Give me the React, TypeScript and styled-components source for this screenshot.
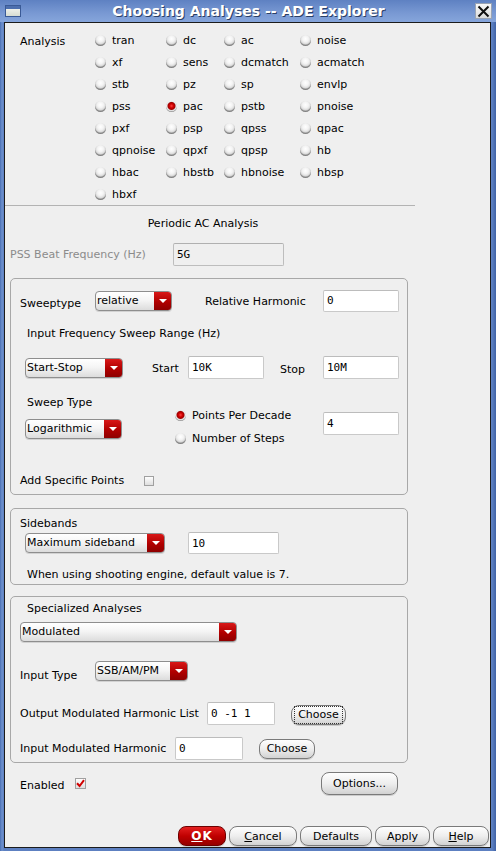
import React from 'react';
import styled, { createGlobalStyle } from 'styled-components';

const GlobalStyle = createGlobalStyle`
  html, body {
    margin: 0;
    padding: 0;
    background: #5d80c1;
  }
  body {
    font-family: 'DejaVu Sans', 'Liberation Sans', sans-serif;
    font-size: 11px;
    color: #000;
  }
  * {
    box-sizing: border-box;
  }
`;

const Frame = styled.div`
  width: 496px;
  height: 851px;
  display: flex;
  flex-direction: column;
  background: linear-gradient(to right, #4a6fb3, #6d90cd 2px, #5d80c1 4px, #5d80c1 calc(100% - 4px), #3f62a6);
`;

const TitleBar = styled.div`
  height: 22px;
  display: grid;
  grid-template-columns: 1fr auto 1fr;
  align-items: center;
  padding: 0 4px 0 5px;
  background: linear-gradient(#5e81c2, #7999d3 60%, #86a5db);
`;

const AppIcon = styled.div`
  width: 16px;
  height: 12px;
  border: 1px solid #3a5a96;
  background: linear-gradient(#4d6fae 0, #4d6fae 3px, #eef0ea 3px, #d6dcd2);
  justify-self: start;
`;

const TitleText = styled.div`
  color: #fff;
  font-weight: bold;
  font-size: 14px;
  text-shadow: 1px 1px 0 #2b3f66;
  white-space: nowrap;
`;

const CloseBox = styled.div`
  justify-self: end;
  width: 17px;
  height: 16px;
  border: 1px solid #9aa4b4;
  background: linear-gradient(#f8f8f8, #dcdcdc);
  display: flex;
  align-items: center;
  justify-content: center;
`;

const Body = styled.div`
  flex: 1;
  margin: 0 5px 3px 4px;
  border: 1px solid #1b1b1b;
  background: #efefef;
  display: flex;
  flex-direction: column;
`;

const AnalysisSection = styled.div`
  display: flex;
  padding: 6px 0 0 15px;
`;

const SectionLabel = styled.div`
  width: 75px;
  line-height: 22px;
  padding-top: 2px;
`;

const RadioGrid = styled.div`
  display: grid;
  grid-template-columns: 71px 58px 76px 80px;
  grid-auto-rows: 22px;
`;

const RadioItem = styled.label<{ $h?: number }>`
  display: flex;
  align-items: center;
  gap: 6px;
  height: ${p => p.$h ?? 22}px;
  white-space: nowrap;
`;

const RadioDot = styled.span<{ $on?: boolean }>`
  width: 11px;
  height: 11px;
  border-radius: 50%;
  flex: none;
  background: ${p =>
    p.$on
      ? 'radial-gradient(circle at 50% 45%, #ff4040 0, #d00000 2px, #a00000 3.5px, #e6e6e6 4.5px, #f6f6f6 5px, #bdbdbd 6px)'
      : 'radial-gradient(circle at 50% 35%, #ffffff 0, #f3f3f3 3px, #dcdcdc 5px, #a9a9a9 6px)'};
  box-shadow: inset 0 -1px 1px rgba(0, 0, 0, 0.25);
`;

const Separator = styled.div`
  height: 1px;
  width: 410px;
  background: #b3b3b3;
`;

const Heading = styled.div`
  width: 396px;
  margin-top: 10px;
  text-align: center;
  line-height: 16px;
`;

const Row = styled.div<{ $mt?: number; $pl?: number; $h?: number }>`
  display: flex;
  align-items: center;
  margin-top: ${p => p.$mt ?? 0}px;
  padding-left: ${p => p.$pl ?? 0}px;
  height: ${p => (p.$h ? `${p.$h}px` : 'auto')};
`;

const Label = styled.span<{ $w?: number; $dy?: number; $muted?: boolean; $ml?: number }>`
  width: ${p => (p.$w ? `${p.$w}px` : 'auto')};
  flex: none;
  margin-left: ${p => p.$ml ?? 0}px;
  padding-top: ${p => p.$dy ?? 0}px;
  color: ${p => (p.$muted ? '#8b8b8b' : '#000')};
  white-space: nowrap;
  line-height: 16px;
`;

const Caption = styled.div<{ $mt?: number; $pl?: number }>`
  margin-top: ${p => p.$mt ?? 0}px;
  padding-left: ${p => p.$pl ?? 0}px;
  line-height: 16px;
  white-space: nowrap;
`;

const TextField = styled.div<{ $w: number; $h?: number; $mt?: number; $ml?: number; $disabled?: boolean }>`
  width: ${p => p.$w}px;
  height: ${p => p.$h ?? 23}px;
  flex: none;
  margin-top: ${p => p.$mt ?? 0}px;
  margin-left: ${p => p.$ml ?? 0}px;
  border: 1px solid ${p => (p.$disabled ? '#bdbdbd' : '#c9c9c9')};
  border-top-color: ${p => (p.$disabled ? '#b0b0b0' : '#bcbcbc')};
  border-radius: 2px;
  background: ${p => (p.$disabled ? '#efefef' : '#fff')};
  padding-left: 3px;
  display: flex;
  align-items: center;
  font-family: 'DejaVu Sans Mono', 'Liberation Mono', monospace;
  font-size: 11px;
  white-space: pre;
`;

const DropBox = styled.div<{ $w: number; $mt?: number }>`
  width: ${p => p.$w}px;
  height: 20px;
  flex: none;
  margin-top: ${p => p.$mt ?? 0}px;
  display: flex;
  border: 1px solid #8e8e8e;
  border-radius: 4px;
  overflow: hidden;
  background: linear-gradient(#ffffff, #f5f5f5 45%, #dcdcdc);
  box-shadow: 0 1px 0 rgba(0, 0, 0, 0.12);
`;

const DropText = styled.span`
  flex: 1;
  padding-left: 1px;
  line-height: 17px;
  white-space: nowrap;
`;

const DropArrow = styled.span`
  width: 17px;
  flex: none;
  display: flex;
  align-items: center;
  justify-content: center;
  background: linear-gradient(#d81818, #b00000 55%, #8e0000);
  &::after {
    content: '';
    border-left: 4px solid transparent;
    border-right: 4px solid transparent;
    border-top: 4px solid #fff;
  }
`;

const Group = styled.div<{ $h: number; $mt: number }>`
  width: 398px;
  height: ${p => p.$h}px;
  margin: ${p => p.$mt}px 0 0 5px;
  border: 1px solid #a8a8a8;
  border-radius: 5px;
  display: flex;
  flex-direction: column;
`;

const SweepBlock = styled.div`
  display: flex;
  align-items: flex-start;
  margin-top: 15px;
  padding-left: 14px;
`;

const SweepLeft = styled.div`
  width: 97px;
  display: flex;
  flex-direction: column;
`;

const SweepRadios = styled.div`
  width: 148px;
  margin: 9px 0 0 53px;
  display: flex;
  flex-direction: column;
`;

const CheckBox = styled.span<{ $w?: number }>`
  width: ${p => p.$w ?? 11}px;
  height: ${p => p.$w ?? 11}px;
  flex: none;
  border: 1px solid #a0a0a0;
  background: linear-gradient(#fefefe, #dedede);
  display: flex;
  align-items: center;
  justify-content: center;
`;

const PushButton = styled.button<{ $w: number; $h?: number; $ml?: number; $mt?: number }>`
  width: ${p => p.$w}px;
  height: ${p => p.$h ?? 20}px;
  flex: none;
  margin: ${p => p.$mt ?? 0}px 0 0 ${p => p.$ml ?? 0}px;
  padding: 0;
  border: 1px solid #7a7a7a;
  border-radius: 8px;
  background: linear-gradient(#fefefe, #eeeeee 50%, #d2d2d2);
  font-family: 'DejaVu Sans', 'Liberation Sans', sans-serif;
  font-size: 11px;
  color: #000;
  display: flex;
  align-items: center;
  justify-content: center;
  box-shadow: 0 1px 0 rgba(0, 0, 0, 0.15);
`;

const FocusRing = styled.span`
  outline: 1px dotted #333;
  outline-offset: 0;
  padding: 1px 3px;
  line-height: 14px;
`;

const OkButton = styled(PushButton)`
  border-color: #6d0000;
  background: linear-gradient(#e42020, #c00000 50%, #950000);
  color: #fff;
  font-weight: bold;
  font-size: 12px;
  letter-spacing: 1px;
`;

const EnabledRow = styled.div`
  display: flex;
  align-items: center;
  width: 393px;
  height: 23px;
  margin-top: 9px;
  padding-left: 15px;
`;

const Spacer = styled.div`
  flex: 1;
`;

const ButtonBar = styled.div`
  margin-top: auto;
  display: flex;
  justify-content: flex-end;
  gap: 3px;
  padding: 0 1px 1px 0;
`;

const analyses = [
  'tran', 'dc', 'ac', 'noise',
  'xf', 'sens', 'dcmatch', 'acmatch',
  'stb', 'pz', 'sp', 'envlp',
  'pss', 'pac', 'pstb', 'pnoise',
  'pxf', 'psp', 'qpss', 'qpac',
  'qpnoise', 'qpxf', 'qpsp', 'hb',
  'hbac', 'hbstb', 'hbnoise', 'hbsp',
  'hbxf',
];

const Dropdown = ({ value, w, mt }: { value: string; w: number; mt?: number }) => (
  <DropBox $w={w} $mt={mt}>
    <DropText>{value}</DropText>
    <DropArrow />
  </DropBox>
);

const App = () => (
  <>
    <GlobalStyle />
    <Frame>
      <TitleBar>
        <AppIcon />
        <TitleText>Choosing Analyses -- ADE Explorer</TitleText>
        <CloseBox>
          <svg width="13" height="13" viewBox="0 0 13 13">
            <path d="M1.5 1.5 L11.5 11.5 M11.5 1.5 L1.5 11.5" stroke="#111" strokeWidth="2" />
          </svg>
        </CloseBox>
      </TitleBar>
      <Body>
        <AnalysisSection>
          <SectionLabel>Analysis</SectionLabel>
          <RadioGrid>
            {analyses.map(name => (
              <RadioItem key={name}>
                <RadioDot $on={name === 'pac'} />
                {name}
              </RadioItem>
            ))}
          </RadioGrid>
        </AnalysisSection>
        <Separator />
        <Heading>Periodic AC Analysis</Heading>
        <Row $mt={11} $pl={5} $h={23}>
          <Label $w={163} $muted>PSS Beat Frequency (Hz)</Label>
          <TextField $w={111} $disabled>5G</TextField>
        </Row>

        <Group $h={217} $mt={12}>
          <Row $mt={10} $pl={9} $h={23}>
            <Label $w={75} $dy={6}>Sweeptype</Label>
            <Dropdown value="relative" w={77} />
            <Label $w={118} $ml={33} $dy={2}>Relative Harmonic</Label>
            <TextField $w={76} $h={22}>0</TextField>
          </Row>
          <Caption $mt={14} $pl={16}>Input Frequency Sweep Range (Hz)</Caption>
          <Row $mt={13} $pl={14} $h={25}>
            <Dropdown value="Start-Stop" w={98} />
            <Label $w={36} $ml={29} $dy={2}>Start</Label>
            <TextField $w={76}>10K</TextField>
            <Label $w={43} $ml={16} $dy={4}>Stop</Label>
            <TextField $w={76}>10M</TextField>
          </Row>
          <SweepBlock>
            <SweepLeft>
              <Caption $pl={2}>Sweep Type</Caption>
              <Dropdown value="Logarithmic" w={97} mt={8} />
            </SweepLeft>
            <SweepRadios>
              <RadioItem $h={23}>
                <RadioDot $on />
                Points Per Decade
              </RadioItem>
              <RadioItem $h={23}>
                <RadioDot />
                Number of Steps
              </RadioItem>
            </SweepRadios>
            <TextField $w={76} $mt={17}>4</TextField>
          </SweepBlock>
          <Row $mt={23} $pl={9} $h={16}>
            <Label $w={124}>Add Specific Points</Label>
            <CheckBox $w={10} />
          </Row>
        </Group>

        <Group $h={77} $mt={13}>
          <Caption $mt={7} $pl={9}>Sidebands</Caption>
          <Row $pl={14} $h={22}>
            <Dropdown value="Maximum sideband" w={140} />
            <TextField $w={91} $h={22} $ml={23}>10</TextField>
          </Row>
          <Caption $mt={13} $pl={16}>When using shooting engine, default value is 7.</Caption>
        </Group>

        <Group $h={167} $mt={11}>
          <Caption $mt={4} $pl={16}>Specialized Analyses</Caption>
          <Row $mt={5} $pl={9}>
            <Dropdown value="Modulated" w={217} />
          </Row>
          <Row $mt={19} $pl={9} $h={20}>
            <Label $w={75} $dy={10}>Input Type</Label>
            <Dropdown value="SSB/AM/PM" w={93} />
          </Row>
          <Row $mt={21} $pl={9} $h={23}>
            <Label $w={187}>Output Modulated Harmonic List</Label>
            <TextField $w={68}>0 -1 1</TextField>
            <PushButton $w={55} $ml={16} $mt={2}>
              <FocusRing>Choose</FocusRing>
            </PushButton>
          </Row>
          <Row $mt={12} $pl={9} $h={23}>
            <Label $w={155}>Input Modulated Harmonic</Label>
            <TextField $w={68}>0</TextField>
            <PushButton $w={56} $ml={16}>Choose</PushButton>
          </Row>
        </Group>

        <EnabledRow>
          <Label $w={55} $dy={5}>Enabled</Label>
          <CheckBox>
            <svg width="9" height="9" viewBox="0 0 9 9">
              <path d="M1 4.2 L3.6 7 L8 1.2" fill="none" stroke="#d00000" strokeWidth="2" />
            </svg>
          </CheckBox>
          <Spacer />
          <PushButton $w={77} $h={23}>Options...</PushButton>
        </EnabledRow>

        <ButtonBar>
          <OkButton $w={48}><u>O</u>K</OkButton>
          <PushButton $w={68}><u>C</u>ancel</PushButton>
          <PushButton $w={72}>Defaults</PushButton>
          <PushButton $w={55}>Apply</PushButton>
          <PushButton $w={56}><u>H</u>elp</PushButton>
        </ButtonBar>
      </Body>
    </Frame>
  </>
);

export default App;
